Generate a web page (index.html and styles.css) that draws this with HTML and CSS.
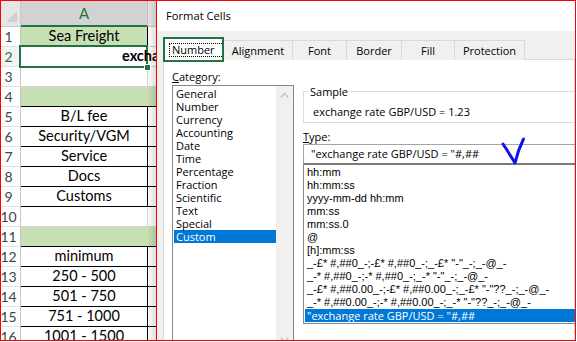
FILE: index.html
```html
<!DOCTYPE html>
<html>
<head>
<meta charset="utf-8">
<link rel="stylesheet" href="styles.css">
</head>
<body>
<div class="frame">
  <div class="sheet">
    <div class="grid">
      <div class="c corner"></div>
      <div class="c ch sel">A</div>
      <div class="c ch colb"></div>

      <div class="c rh">1</div>
      <div class="c a green bl-r">Sea Freight</div>
      <div class="c b"></div>

      <div class="c rh selrow">2</div>
      <div class="c a active"><span class="overflow">exchange rate GBP/USD = 1.23</span><span class="handle"></span></div>
      <div class="c b"></div>

      <div class="c rh">3</div>
      <div class="c a"></div>
      <div class="c b"></div>

      <div class="c rh">4</div>
      <div class="c merged green bl-b"></div>

      <div class="c rh">5</div>
      <div class="c a bl-r bl-b">B/L fee</div>
      <div class="c b bl-b"></div>

      <div class="c rh">6</div>
      <div class="c a bl-r bl-b">Security/VGM</div>
      <div class="c b bl-b"></div>

      <div class="c rh">7</div>
      <div class="c a bl-r bl-b">Service</div>
      <div class="c b bl-b"></div>

      <div class="c rh">8</div>
      <div class="c a bl-r bl-b">Docs</div>
      <div class="c b bl-b"></div>

      <div class="c rh">9</div>
      <div class="c a bl-r bl-b">Customs</div>
      <div class="c b bl-b"></div>

      <div class="c rh">10</div>
      <div class="c a"></div>
      <div class="c b"></div>

      <div class="c rh">11</div>
      <div class="c merged green bl-b"></div>

      <div class="c rh">12</div>
      <div class="c a bl-r bl-b">minimum</div>
      <div class="c b bl-b"></div>

      <div class="c rh">13</div>
      <div class="c a bl-r bl-b">250 - 500</div>
      <div class="c b bl-b"></div>

      <div class="c rh">14</div>
      <div class="c a bl-r bl-b">501 - 750</div>
      <div class="c b bl-b"></div>

      <div class="c rh">15</div>
      <div class="c a bl-r bl-b">751 - 1000</div>
      <div class="c b bl-b"></div>

      <div class="c rh">16</div>
      <div class="c a bl-r bl-b">1001 - 1500</div>
      <div class="c b bl-b"></div>
    </div>
  </div>

  <div class="dialog">
    <div class="titlebar">Format Cells</div>
    <div class="dbody">
      <div class="tabs">
        <div class="tab active w-number"><span class="focus">Number</span></div>
        <div class="tab w-align">Alignment</div>
        <div class="tab w-font">Font</div>
        <div class="tab w-border">Border</div>
        <div class="tab w-fill">Fill</div>
        <div class="tab w-prot">Protection</div>
      </div>
      <div class="panel">
        <div class="leftcol">
          <div class="label"><u>C</u>ategory:</div>
          <div class="listbox">
            <ul class="cat-items">
              <li>General</li>
              <li>Number</li>
              <li>Currency</li>
              <li>Accounting</li>
              <li>Date</li>
              <li>Time</li>
              <li>Percentage</li>
              <li>Fraction</li>
              <li>Scientific</li>
              <li>Text</li>
              <li>Special</li>
              <li class="selected">Custom</li>
            </ul>
            <div class="vscroll">
              <div class="arrow">
                <svg width="9" height="6" viewBox="0 0 9 6"><polyline points="0.8,5.2 4.5,1.5 8.2,5.2" fill="none" stroke="#c2c2c2" stroke-width="1.4"/></svg>
              </div>
              <div class="arrow">
                <svg width="9" height="6" viewBox="0 0 9 6"><polyline points="0.8,0.8 4.5,4.5 8.2,0.8" fill="none" stroke="#c2c2c2" stroke-width="1.4"/></svg>
              </div>
            </div>
          </div>
        </div>
        <div class="rightcol">
          <fieldset class="sample">
            <legend>Sample</legend>
            <div class="sample-text">exchange rate GBP/USD = 1.23</div>
          </fieldset>
          <div class="label type-label"><u>T</u>ype:</div>
          <div class="type-input">"exchange rate GBP/USD = "#,##</div>
          <ul class="type-list">
            <li>hh:mm</li>
            <li>hh:mm:ss</li>
            <li>yyyy-mm-dd hh:mm</li>
            <li>mm:ss</li>
            <li>mm:ss.0</li>
            <li>@</li>
            <li>[h]:mm:ss</li>
            <li>_-£* #,##0_-;-£* #,##0_-;_-£* "-"_-;_-@_-</li>
            <li>_-* #,##0_-;-* #,##0_-;_-* "-"_-;_-@_-</li>
            <li>_-£* #,##0.00_-;-£* #,##0.00_-;_-£* "-"??_-;_-@_-</li>
            <li>_-* #,##0.00_-;-* #,##0.00_-;_-* "-"??_-;_-@_-</li>
            <li class="selected">"exchange rate GBP/USD = "#,##</li>
          </ul>
        </div>
      </div>
    </div>
    <svg class="tick" width="32" height="34" viewBox="0 0 32 34">
      <path d="M6 9 Q 12 18 18 28 Q 21 15 26.5 4" fill="none" stroke="#1212e6" stroke-width="3" stroke-linecap="round" stroke-linejoin="round"/>
    </svg>
  </div>
</div>
</body>
</html>
```

FILE: styles.css
```css
* { box-sizing: border-box; }

html, body {
  margin: 0;
  padding: 0;
  background: #ffffff;
}

body {
  width: 577px;
  height: 342px;
  overflow: hidden;
}

.frame {
  width: 576px;
  height: 341px;
  border: 1px solid #ff0000;
  display: flex;
  overflow: hidden;
}

/* ---------- spreadsheet ---------- */
.sheet {
  flex: 0 0 155px;
  width: 155px;
  position: relative;
  overflow: hidden;
  font-family: Lato, "Liberation Sans", sans-serif;
  font-size: 14.5px;
  color: #000;
}

.sheet::after {
  content: "";
  position: absolute;
  top: 0;
  right: 0;
  bottom: 0;
  width: 9px;
  background: linear-gradient(to right, rgba(0, 0, 0, 0), rgba(0, 0, 0, 0.13));
  pointer-events: none;
}

.grid {
  display: grid;
  grid-template-columns: 20px 127px 8px;
  grid-template-rows: 26px repeat(16, 20px);
}

.c {
  border-right: 1px solid #d4d4d4;
  border-bottom: 1px solid #d4d4d4;
  display: flex;
  align-items: center;
  justify-content: center;
  white-space: nowrap;
  line-height: 1;
  background: #fff;
}

.c.b {
  border-right: none;
  background: transparent;
}

.corner {
  background: #e6e6e6;
  border-right-color: #c8c8c8;
  border-bottom-color: #c8c8c8;
  position: relative;
}

.corner::after {
  content: "";
  position: absolute;
  right: 3px;
  bottom: 4px;
  width: 0;
  height: 0;
  border-left: 11px solid transparent;
  border-bottom: 11px solid #d0d0d0;
}

.ch {
  background: #e6e6e6;
  border-right-color: #c8c8c8;
  border-bottom-color: #c8c8c8;
  align-items: flex-end;
  padding-bottom: 4px;
  font-size: 15px;
  color: #217346;
}

.ch.sel {
  background: #d2d2d2;
  border-bottom: 2px solid #217346;
  border-right-color: #bdbdbd;
}

.ch.colb {
  border-right: none;
}

.rh {
  background: #fff;
  color: #444;
  padding-right: 4px;
  font-size: 14px;
  border-right-color: #c6c6c6;
  border-bottom-color: #e1e1e1;
}

.rh.selrow {
  color: #217346;
  background: #f3f3f3;
}

.green {
  background: #c6e0b4;
}

.merged {
  grid-column: 2 / 4;
  border-right: none;
}

.bl-r { border-right-color: #000; }
.bl-b { border-bottom-color: #000; }

.active {
  position: relative;
  justify-content: flex-start;
  padding-left: 101px;
  overflow: visible;
  z-index: 1;
  background: transparent;
}

.active::before {
  content: "";
  position: absolute;
  left: -2px;
  top: -2px;
  right: -1px;
  bottom: -2px;
  border: 2px solid #217346;
  pointer-events: none;
}

.overflow {
  font-weight: 700;
  position: relative;
  z-index: 0;
}

.handle {
  position: absolute;
  right: -4px;
  bottom: -5px;
  width: 7px;
  height: 7px;
  background: #217346;
  border: 1px solid #fff;
  z-index: 2;
}

/* ---------- dialog ---------- */
.dialog {
  flex: 1;
  border-left: 1px solid #ff0000;
  background: #f0f0f0;
  position: relative;
  overflow: hidden;
  font-family: "Open Sans", "Noto Sans", sans-serif;
  font-size: 11px;
  color: #000;
}

.titlebar {
  height: 30px;
  background: #fff;
  padding-left: 9px;
  line-height: 30px;
  font-size: 11.2px;
}

.dbody {
  padding: 7px 0 0 6px;
}

.tabs {
  display: flex;
  align-items: flex-end;
  height: 22px;
  margin-left: 1px;
  position: relative;
  z-index: 1;
}

.tab {
  height: 20px;
  border: 1px solid #d9d9d9;
  border-bottom: none;
  background: #f0f0f0;
  margin-left: -1px;
  display: flex;
  align-items: center;
  justify-content: center;
  line-height: 15px;
  white-space: nowrap;
}

.tab.active {
  margin-left: 0;
  height: 22px;
  background: #fff;
  justify-content: flex-start;
  padding-left: 4px;
  padding-top: 1px;
  position: relative;
  z-index: 2;
}

.focus {
  border: 1px dotted #000;
  padding: 0 8px 0 2px;
  line-height: 12px;
  height: 14px;
}

.w-number { width: 60px; }
.w-align { width: 70px; }
.w-font { width: 55px; }
.w-border { width: 56px; }
.w-fill { width: 54px; }
.w-prot { width: 71px; }

.panel {
  background: #fff;
  border: 1px solid #d9d9d9;
  margin-top: -1px;
  height: 400px;
  display: flex;
  padding: 9px 0 0 8px;
}

.leftcol {
  flex: 0 0 122px;
  width: 122px;
  margin-right: 9px;
}

.label {
  height: 15px;
  line-height: 15px;
  white-space: nowrap;
}

.listbox {
  margin-top: 1px;
  border: 1px solid #828790;
  height: 264px;
  display: flex;
}

.cat-items {
  flex: 1;
  margin: 0;
  padding: 1px 0 0 0;
  list-style: none;
}

.cat-items li {
  height: 13px;
  line-height: 13px;
  padding-left: 2px;
  margin-left: 1px;
  white-space: nowrap;
}

.cat-items li.selected {
  background: #0078d7;
  color: #fff;
}

.vscroll {
  flex: 0 0 17px;
  width: 17px;
  background: #f0f0f0;
  display: flex;
  flex-direction: column;
  justify-content: space-between;
}

.arrow {
  height: 17px;
  display: flex;
  align-items: center;
  justify-content: center;
}

.arrow svg { display: block; }

.rightcol {
  flex: 0 0 300px;
  width: 300px;
}

.sample {
  margin: 15px 0 0 0;
  border: 1px solid #dcdcdc;
  padding: 0 0 3px 4px;
  min-width: 0;
}

.sample legend {
  padding: 0 2px;
  line-height: 15px;
}

.sample-text {
  padding: 5px 0 0 5px;
  line-height: 15px;
  white-space: nowrap;
}

.type-label {
  margin-top: 6px;
}

.type-input {
  height: 20px;
  border: 1px solid #a5a5a5;
  border-bottom-color: #7a7a7a;
  padding-left: 7px;
  line-height: 18px;
  white-space: nowrap;
}

.type-list {
  margin: 0;
  padding: 1px 0 1px 0;
  list-style: none;
  height: 160px;
  border: 1px solid #828790;
  border-top-color: #7a7a7a;
  overflow: hidden;
  font-family: "Liberation Sans", Arial, sans-serif;
  font-size: 11px;
}

.type-list li {
  height: 13px;
  line-height: 13px;
  padding-left: 2px;
  margin-left: 1px;
  white-space: nowrap;
}

.type-list li.selected {
  background: #0078d7;
  color: #fff;
  font-family: "Open Sans", "Noto Sans", sans-serif;
}

.tick {
  position: absolute;
  left: 340px;
  top: 134px;
}
```
